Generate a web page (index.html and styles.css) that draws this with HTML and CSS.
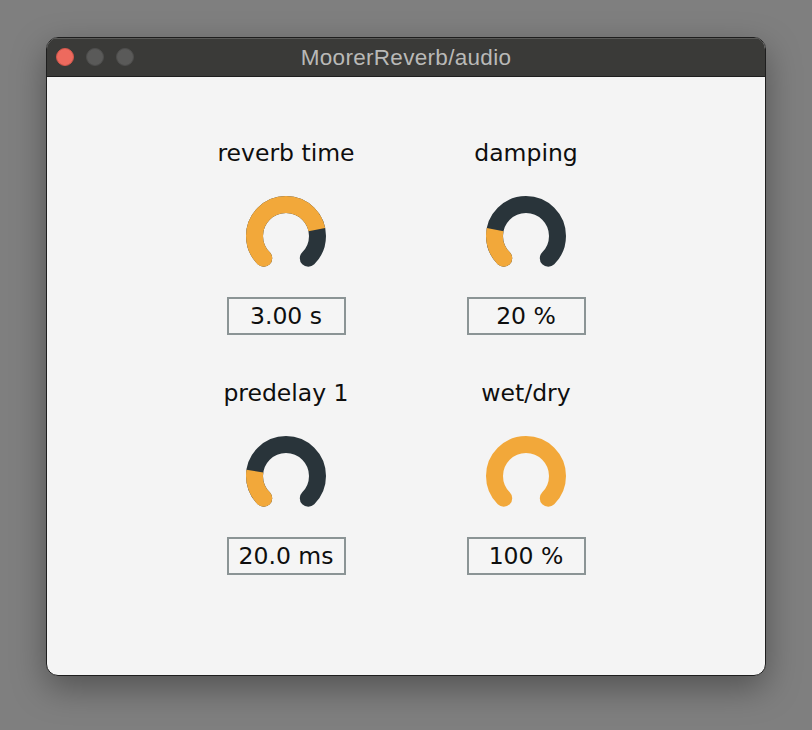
FILE: index.html
```html
<!DOCTYPE html>
<html>
<head>
<meta charset="utf-8">
<link rel="stylesheet" href="styles.css">
</head>
<body>
<div class="window">
  <div class="titlebar">
    <div class="lights">
      <span class="light red"></span>
      <span class="light grey"></span>
      <span class="light grey"></span>
    </div>
    <div class="title">MoorerReverb/audio</div>
  </div>
  <div class="content">
    <div class="grid">
      <div class="cell">
        <div class="label">reverb time</div>
        <svg class="knob" viewBox="0 0 84 84" width="84" height="84">
          <path class="track" d="M19.73 64.27 A31.5 31.5 0 1 1 64.27 64.27"/>
          <path class="value" pathLength="100" stroke-dasharray="79 200" d="M19.73 64.27 A31.5 31.5 0 1 1 64.27 64.27"/>
          <circle class="cap" cx="19.73" cy="64.27" r="8.5"/>
        </svg>
        <div class="box">3.00 s</div>
      </div>
      <div class="cell">
        <div class="label">damping</div>
        <svg class="knob" viewBox="0 0 84 84" width="84" height="84">
          <path class="track" d="M19.73 64.27 A31.5 31.5 0 1 1 64.27 64.27"/>
          <path class="value" pathLength="100" stroke-dasharray="21 200" d="M19.73 64.27 A31.5 31.5 0 1 1 64.27 64.27"/>
          <circle class="cap" cx="19.73" cy="64.27" r="8.5"/>
        </svg>
        <div class="box">20 %</div>
      </div>
      <div class="cell">
        <div class="label">predelay 1</div>
        <svg class="knob" viewBox="0 0 84 84" width="84" height="84">
          <path class="track" d="M19.73 64.27 A31.5 31.5 0 1 1 64.27 64.27"/>
          <path class="value" pathLength="100" stroke-dasharray="20 200" d="M19.73 64.27 A31.5 31.5 0 1 1 64.27 64.27"/>
          <circle class="cap" cx="19.73" cy="64.27" r="8.5"/>
        </svg>
        <div class="box">20.0 ms</div>
      </div>
      <div class="cell">
        <div class="label">wet/dry</div>
        <svg class="knob" viewBox="0 0 84 84" width="84" height="84">
          <path class="track full" d="M19.73 64.27 A31.5 31.5 0 1 1 64.27 64.27"/>
        </svg>
        <div class="box">100 %</div>
      </div>
    </div>
  </div>
</div>
</body>
</html>
```
FILE: styles.css
```css
html, body {
  margin: 0;
  padding: 0;
}
body {
  background: #7f7f7f;
  width: 812px;
  height: 730px;
  overflow: hidden;
  padding: 37px 0 0 46px;
  box-sizing: border-box;
  font-family: "DejaVu Sans", sans-serif;
}
.window {
  width: 720px;
  height: 639px;
  box-sizing: border-box;
  border: 1px solid #1e1e1e;
  border-radius: 12px;
  overflow: hidden;
  background: #f4f4f4;
  box-shadow: 0 12px 34px rgba(0, 0, 0, 0.35);
  display: flex;
  flex-direction: column;
}
.titlebar {
  height: 39px;
  box-sizing: border-box;
  background: #3a3a38;
  border-top: 1px solid #5a5a58;
  border-bottom: 1px solid #1e1e1e;
  display: flex;
  align-items: center;
  position: relative;
}
.lights {
  display: flex;
  gap: 12px;
  padding-left: 9px;
  position: absolute;
  left: 0;
  top: 9px;
}
.light {
  width: 18px;
  height: 18px;
  border-radius: 50%;
  box-sizing: border-box;
}
.red {
  background: #ed6a5e;
  border: 1px solid #d2574c;
}
.grey {
  background: #5a5a59;
  border: 1px solid #4e4e4d;
}
.title {
  flex: 1;
  text-align: center;
  color: #b9b9b7;
  font-family: "Liberation Sans", Arial, sans-serif;
  font-size: 22.5px;
  letter-spacing: 0.3px;
}
.content {
  flex: 1;
  padding-top: 62px;
  display: flex;
  justify-content: center;
}
.grid {
  display: grid;
  grid-template-columns: 240px 240px;
  row-gap: 44px;
  align-content: start;
}
.cell {
  display: flex;
  flex-direction: column;
  align-items: center;
}
.label {
  font-size: 23.5px;
  line-height: 28px;
  height: 28px;
  color: #0e0e0e;
}
.knob {
  display: block;
  margin-top: 27px;
}
.track {
  fill: none;
  stroke: #29343a;
  stroke-width: 17;
  stroke-linecap: round;
}
.track.full {
  stroke: #f2a83a;
}
.value {
  fill: none;
  stroke: #f2a83a;
  stroke-width: 17;
  stroke-linecap: butt;
}
.cap {
  fill: #f2a83a;
}
.box {
  margin-top: 19px;
  width: 119px;
  height: 38px;
  box-sizing: border-box;
  border: 2px solid #8b9495;
  background: #f5f5f5;
  font-size: 23.5px;
  line-height: 34px;
  text-align: center;
  color: #0e0e0e;
}
```
